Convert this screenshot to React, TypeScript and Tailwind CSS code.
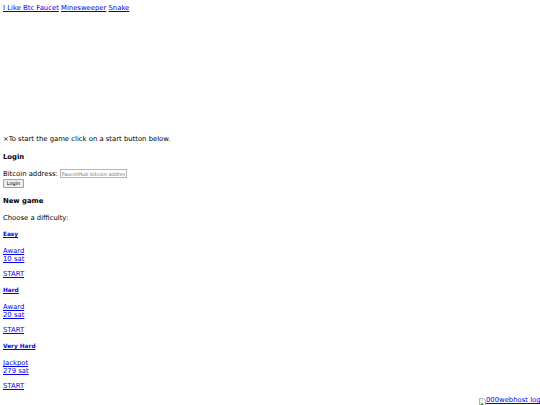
const link = "text-[#0000ee] underline"

function Difficulty(props: { name: string; label: string; amount: string }) {
    return (
        <div>
            <h5 className="mt-[9px] mb-[9px] text-[5.8px] leading-[7px] font-bold">
                <a href="#" className={link}>{props.name}</a>
            </h5>
            <a href="#" className={`block ${link}`}>
                {props.label}
                <br />
                {props.amount}
            </a>
            <p className="mt-[7px]">
                <a href="#" className={link}>START</a>
            </p>
        </div>
    )
}

export default function App() {
    return (
        <div className="relative h-[405px] w-[540px] overflow-hidden bg-white pl-[3px] text-[6.85px] leading-[8px] text-black font-['DejaVu_Sans',sans-serif]">
            <div className="h-[135px] pt-[4px]">
                <a href="#" className={link}>I Like Btc Faucet</a>{" "}
                <a href="#" className={link}>Minesweeper</a>{" "}
                <a href="#" className={link}>Snake</a>
            </div>
            <p className="h-[18px]">×To start the game click on a start button below.</p>
            <h3 className="mb-[8px] font-bold">Login</h3>
            <div className="flex h-[9px] items-center">
                <span>Bitcoin address:</span>
                <input
                    className="ml-[2px] h-[9px] w-[67px] border border-[#b5b5b5] px-[1px] text-[5px] leading-[7px] outline-none placeholder:text-[#757575]"
                    placeholder="FaucetHub bitcoin address"
                />
            </div>
            <button className="mt-[1px] block h-[9px] w-[21px] rounded-[1px] border border-[#a0a0a0] bg-[#efefef] text-[5px] leading-[7px]">
                Login
            </button>
            <h3 className="mt-[9px] mb-[9px] font-bold">New game</h3>
            <p>Choose a difficulty:</p>
            <Difficulty name="Easy" label="Award" amount="10 sat" />
            <Difficulty name="Hard" label="Award" amount="20 sat" />
            <Difficulty name="Very Hard" label="Jackpot" amount="279 sat" />
            <div className="absolute top-[396px] left-[479px] flex w-[61px] items-start overflow-hidden">
                <svg width="7" height="8" viewBox="0 0 7 8" className="mt-[2px] shrink-0">
                    <path d="M0.5 0.5H4.5L6.5 2.5V7.5H0.5Z" fill="#f4f4f4" stroke="#b0b0b0" />
                    <path d="M1 7L3 4.5L5 7Z" fill="#4caf50" />
                </svg>
                <a href="#" className={`whitespace-nowrap ${link}`}>000webhost logo</a>
            </div>
        </div>
    )
}
